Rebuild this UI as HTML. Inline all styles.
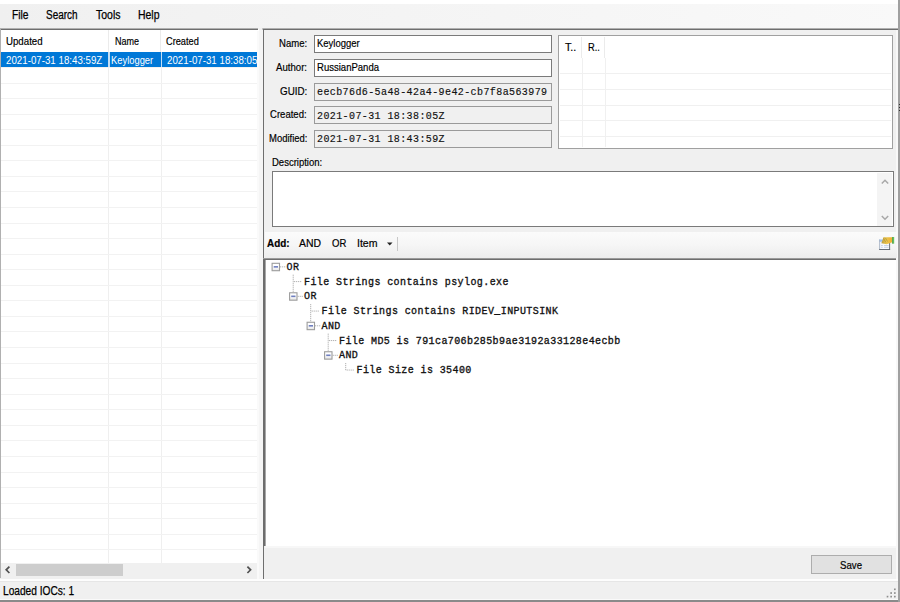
<!DOCTYPE html>
<html><head><meta charset="utf-8"><style>
html,body{margin:0;padding:0;}
body{width:900px;height:602px;position:relative;overflow:hidden;background:#f0f0f0;font-family:'Liberation Sans',sans-serif;}
.t{position:absolute;white-space:pre;transform-origin:0 0;}
.b{position:absolute;box-sizing:border-box;}
</style></head><body>
<div class="b" style="left:0.00px;top:0.00px;width:900.00px;height:3.50px;background:#ffffff;"></div>
<div class="b" style="left:0.00px;top:3.50px;width:900.00px;height:24.50px;background:linear-gradient(to right,#f0f0f0,#f9f9f9);"></div>
<div class="t" style="left:12.20px;top:8.94px;font-size:12px;line-height:12px;font-weight:400;color:#000;transform:scaleX(0.8530);-webkit-text-stroke:0.25px #000;">File</div>
<div class="t" style="left:46.20px;top:8.94px;font-size:12px;line-height:12px;font-weight:400;color:#000;transform:scaleX(0.8283);-webkit-text-stroke:0.25px #000;">Search</div>
<div class="t" style="left:95.70px;top:8.94px;font-size:12px;line-height:12px;font-weight:400;color:#000;transform:scaleX(0.8745);-webkit-text-stroke:0.25px #000;">Tools</div>
<div class="t" style="left:138.20px;top:8.94px;font-size:12px;line-height:12px;font-weight:400;color:#000;transform:scaleX(0.8709);-webkit-text-stroke:0.25px #000;">Help</div>
<div class="b" style="left:0.00px;top:29.00px;width:258.50px;height:549.00px;background:#fff;"></div>
<div class="b" style="left:0.00px;top:28.00px;width:257.50px;height:1.00px;background:#b0b0b0;"></div>
<div class="b" style="left:0.00px;top:29.00px;width:257.50px;height:1.00px;background:#6e6e6e;"></div>
<div class="b" style="left:0.00px;top:28.00px;width:1.00px;height:550.00px;background:#b0b0b0;"></div>
<div class="b" style="left:257.00px;top:30.50px;width:1.50px;height:548.50px;background:#fafafa;"></div>
<div class="b" style="left:107.80px;top:30.00px;width:1.00px;height:22.00px;background:#ebebeb;"></div>
<div class="b" style="left:159.80px;top:30.00px;width:1.00px;height:22.00px;background:#ebebeb;"></div>
<div class="b" style="left:108.00px;top:66.70px;width:1.00px;height:496.05px;background:#efefef;"></div>
<div class="b" style="left:160.60px;top:66.70px;width:1.00px;height:496.05px;background:#efefef;"></div>
<div class="b" style="left:1.00px;top:66.94px;width:256.00px;height:1.00px;background:#f2f2f2;"></div>
<div class="b" style="left:1.00px;top:82.50px;width:256.00px;height:1.00px;background:#f2f2f2;"></div>
<div class="b" style="left:1.00px;top:98.06px;width:256.00px;height:1.00px;background:#f2f2f2;"></div>
<div class="b" style="left:1.00px;top:113.62px;width:256.00px;height:1.00px;background:#f2f2f2;"></div>
<div class="b" style="left:1.00px;top:129.18px;width:256.00px;height:1.00px;background:#f2f2f2;"></div>
<div class="b" style="left:1.00px;top:144.74px;width:256.00px;height:1.00px;background:#f2f2f2;"></div>
<div class="b" style="left:1.00px;top:160.30px;width:256.00px;height:1.00px;background:#f2f2f2;"></div>
<div class="b" style="left:1.00px;top:175.86px;width:256.00px;height:1.00px;background:#f2f2f2;"></div>
<div class="b" style="left:1.00px;top:191.42px;width:256.00px;height:1.00px;background:#f2f2f2;"></div>
<div class="b" style="left:1.00px;top:206.98px;width:256.00px;height:1.00px;background:#f2f2f2;"></div>
<div class="b" style="left:1.00px;top:222.54px;width:256.00px;height:1.00px;background:#f2f2f2;"></div>
<div class="b" style="left:1.00px;top:238.10px;width:256.00px;height:1.00px;background:#f2f2f2;"></div>
<div class="b" style="left:1.00px;top:253.66px;width:256.00px;height:1.00px;background:#f2f2f2;"></div>
<div class="b" style="left:1.00px;top:269.22px;width:256.00px;height:1.00px;background:#f2f2f2;"></div>
<div class="b" style="left:1.00px;top:284.78px;width:256.00px;height:1.00px;background:#f2f2f2;"></div>
<div class="b" style="left:1.00px;top:300.34px;width:256.00px;height:1.00px;background:#f2f2f2;"></div>
<div class="b" style="left:1.00px;top:315.90px;width:256.00px;height:1.00px;background:#f2f2f2;"></div>
<div class="b" style="left:1.00px;top:331.46px;width:256.00px;height:1.00px;background:#f2f2f2;"></div>
<div class="b" style="left:1.00px;top:347.02px;width:256.00px;height:1.00px;background:#f2f2f2;"></div>
<div class="b" style="left:1.00px;top:362.58px;width:256.00px;height:1.00px;background:#f2f2f2;"></div>
<div class="b" style="left:1.00px;top:378.14px;width:256.00px;height:1.00px;background:#f2f2f2;"></div>
<div class="b" style="left:1.00px;top:393.70px;width:256.00px;height:1.00px;background:#f2f2f2;"></div>
<div class="b" style="left:1.00px;top:409.26px;width:256.00px;height:1.00px;background:#f2f2f2;"></div>
<div class="b" style="left:1.00px;top:424.82px;width:256.00px;height:1.00px;background:#f2f2f2;"></div>
<div class="b" style="left:1.00px;top:440.38px;width:256.00px;height:1.00px;background:#f2f2f2;"></div>
<div class="b" style="left:1.00px;top:455.94px;width:256.00px;height:1.00px;background:#f2f2f2;"></div>
<div class="b" style="left:1.00px;top:471.50px;width:256.00px;height:1.00px;background:#f2f2f2;"></div>
<div class="b" style="left:1.00px;top:487.06px;width:256.00px;height:1.00px;background:#f2f2f2;"></div>
<div class="b" style="left:1.00px;top:502.62px;width:256.00px;height:1.00px;background:#f2f2f2;"></div>
<div class="b" style="left:1.00px;top:518.18px;width:256.00px;height:1.00px;background:#f2f2f2;"></div>
<div class="b" style="left:1.00px;top:533.74px;width:256.00px;height:1.00px;background:#f2f2f2;"></div>
<div class="b" style="left:1.00px;top:549.30px;width:256.00px;height:1.00px;background:#f2f2f2;"></div>
<div class="t" style="left:6.20px;top:35.57px;font-size:11.5px;line-height:11.5px;font-weight:400;color:#000;transform:scaleX(0.8417);-webkit-text-stroke:0.2px #000;">Updated</div>
<div class="t" style="left:114.80px;top:35.57px;font-size:11.5px;line-height:11.5px;font-weight:400;color:#000;transform:scaleX(0.7821);-webkit-text-stroke:0.2px #000;">Name</div>
<div class="t" style="left:166.10px;top:35.57px;font-size:11.5px;line-height:11.5px;font-weight:400;color:#000;transform:scaleX(0.8015);-webkit-text-stroke:0.2px #000;">Created</div>
<div class="b" style="left:108.10px;top:52.10px;width:1.80px;height:14.60px;background:#c4def4;"></div>
<div class="b" style="left:160.60px;top:52.10px;width:1.30px;height:14.60px;background:#c4def4;"></div>
<div class="b" style="left:1.00px;top:52.10px;width:107.10px;height:14.60px;background:#0078d7;"></div>
<div class="b" style="left:109.90px;top:52.10px;width:50.70px;height:14.60px;background:#0078d7;"></div>
<div class="b" style="left:161.90px;top:52.10px;width:95.10px;height:14.60px;background:#0078d7;"></div>
<div class="t" style="left:6.20px;top:54.97px;font-size:11.5px;line-height:11.5px;font-weight:400;color:#fff;transform:scaleX(0.8461);">2021-07-31 18:43:59Z</div>
<div class="t" style="left:110.80px;top:54.97px;font-size:11.5px;line-height:11.5px;font-weight:400;color:#fff;transform:scaleX(0.8147);">Keylogger</div>
<div style="position:absolute;left:161.9px;top:52.1px;width:95.1px;height:14.6px;overflow:hidden;">
<div class="t" style="left:4.80px;top:2.87px;font-size:11.5px;line-height:11.5px;font-weight:400;color:#fff;transform:scaleX(0.8461);">2021-07-31 18:38:05Z</div>
</div>
<div class="b" style="left:1.00px;top:562.75px;width:256.00px;height:15.25px;background:#f0f0f0;"></div>
<div class="b" style="left:16.30px;top:564.00px;width:106.60px;height:12.00px;background:#cdcdcd;"></div>
<svg style="position:absolute;left:0;top:560px" width="260" height="20"><path d="M9.4 6.6 L6.2 9.8 L9.4 13" stroke="#505050" stroke-width="1.7" fill="none"/><path d="M247.4 6.6 L250.6 9.8 L247.4 13" stroke="#505050" stroke-width="1.7" fill="none"/></svg>
<div class="b" style="left:263.00px;top:28.00px;width:634.50px;height:551.00px;background:#f0f0f0;"></div>
<div class="b" style="left:263.00px;top:28.00px;width:634.50px;height:1.00px;background:#b0b0b0;"></div>
<div class="b" style="left:263.00px;top:29.00px;width:634.50px;height:1.00px;background:#6e6e6e;"></div>
<div class="b" style="left:262.00px;top:28.00px;width:1.00px;height:550.50px;background:#c4c4c4;"></div>
<div class="b" style="left:263.00px;top:29.00px;width:1.00px;height:549.50px;background:#6e6e6e;"></div>
<div class="b" style="left:896.00px;top:30.00px;width:2.00px;height:549.00px;background:#f8f8f8;"></div>
<div class="t" style="left:278.90px;top:38.27px;font-size:11.5px;line-height:11.5px;font-weight:400;color:#000;transform:scaleX(0.8295);-webkit-text-stroke:0.2px #000;">Name:</div>
<div class="t" style="left:276.00px;top:62.07px;font-size:11.5px;line-height:11.5px;font-weight:400;color:#000;transform:scaleX(0.8361);-webkit-text-stroke:0.2px #000;">Author:</div>
<div class="t" style="left:279.70px;top:85.57px;font-size:11.5px;line-height:11.5px;font-weight:400;color:#000;transform:scaleX(0.8544);-webkit-text-stroke:0.2px #000;">GUID:</div>
<div class="t" style="left:270.40px;top:109.47px;font-size:11.5px;line-height:11.5px;font-weight:400;color:#000;transform:scaleX(0.8298);-webkit-text-stroke:0.2px #000;">Created:</div>
<div class="t" style="left:268.60px;top:133.37px;font-size:11.5px;line-height:11.5px;font-weight:400;color:#000;transform:scaleX(0.8228);-webkit-text-stroke:0.2px #000;">Modified:</div>
<div class="b" style="left:314.00px;top:35.00px;width:238.00px;height:18.00px;background:#fff;border:1px solid #7a7a7a;"></div>
<div class="b" style="left:314.00px;top:58.80px;width:238.00px;height:18.00px;background:#fff;border:1px solid #7a7a7a;"></div>
<div class="b" style="left:314.00px;top:82.70px;width:238.00px;height:18.00px;background:#f0f0f0;border:1px solid #9a9a9a;"></div>
<div class="b" style="left:314.00px;top:106.30px;width:238.00px;height:18.00px;background:#f0f0f0;border:1px solid #9a9a9a;"></div>
<div class="b" style="left:314.00px;top:130.00px;width:238.00px;height:18.00px;background:#f0f0f0;border:1px solid #9a9a9a;"></div>
<div class="t" style="left:316.80px;top:38.27px;font-size:11.5px;line-height:11.5px;font-weight:400;color:#000;transform:scaleX(0.8244);-webkit-text-stroke:0.2px #000;">Keylogger</div>
<div class="t" style="left:317.00px;top:62.07px;font-size:11.5px;line-height:11.5px;font-weight:400;color:#000;transform:scaleX(0.8287);-webkit-text-stroke:0.2px #000;">RussianPanda</div>
<div class="t" style="left:317.00px;top:88.20px;font-size:10px;line-height:10px;font-weight:400;color:#111;font-family:'Liberation Mono', monospace;letter-spacing:0.4px;-webkit-text-stroke:0.15px #111;">eecb76d6-5a48-42a4-9e42-cb7f8a563979</div>
<div class="t" style="left:317.00px;top:111.80px;font-size:10px;line-height:10px;font-weight:400;color:#111;font-family:'Liberation Mono', monospace;letter-spacing:0.4px;-webkit-text-stroke:0.15px #111;">2021-07-31 18:38:05Z</div>
<div class="t" style="left:317.00px;top:135.40px;font-size:10px;line-height:10px;font-weight:400;color:#111;font-family:'Liberation Mono', monospace;letter-spacing:0.4px;-webkit-text-stroke:0.15px #111;">2021-07-31 18:43:59Z</div>
<div class="b" style="left:558.00px;top:35.00px;width:335.00px;height:113.50px;background:#fff;border:1px solid #a0a0a0;"></div>
<div class="b" style="left:581.20px;top:37.00px;width:1.00px;height:21.30px;background:#ebebeb;"></div>
<div class="b" style="left:603.90px;top:37.00px;width:1.00px;height:21.30px;background:#ebebeb;"></div>
<div class="b" style="left:582.30px;top:58.30px;width:1.00px;height:89.20px;background:#f0f0f0;"></div>
<div class="b" style="left:604.90px;top:58.30px;width:1.00px;height:89.20px;background:#f0f0f0;"></div>
<div class="b" style="left:560.00px;top:73.40px;width:331.00px;height:1.00px;background:#f0f0f0;"></div>
<div class="b" style="left:560.00px;top:88.95px;width:331.00px;height:1.00px;background:#f0f0f0;"></div>
<div class="b" style="left:560.00px;top:104.50px;width:331.00px;height:1.00px;background:#f0f0f0;"></div>
<div class="b" style="left:560.00px;top:120.05px;width:331.00px;height:1.00px;background:#f0f0f0;"></div>
<div class="b" style="left:560.00px;top:135.60px;width:331.00px;height:1.00px;background:#f0f0f0;"></div>
<div class="t" style="left:565.20px;top:42.07px;font-size:11.5px;line-height:11.5px;font-weight:400;color:#000;transform:scaleX(0.9308);-webkit-text-stroke:0.2px #000;">T..</div>
<div class="t" style="left:588.10px;top:42.07px;font-size:11.5px;line-height:11.5px;font-weight:400;color:#000;transform:scaleX(0.8094);-webkit-text-stroke:0.2px #000;">R..</div>
<div class="t" style="left:272.00px;top:157.27px;font-size:11.5px;line-height:11.5px;font-weight:400;color:#000;transform:scaleX(0.8268);-webkit-text-stroke:0.2px #000;">Description:</div>
<div class="b" style="left:272.00px;top:171.20px;width:622.00px;height:55.60px;background:#fff;border:1px solid #7a7a7a;"></div>
<div class="b" style="left:877.30px;top:172.50px;width:15.20px;height:53.00px;background:#f4f4f4;"></div>
<svg style="position:absolute;left:877px;top:172px" width="16" height="54"><path d="M4.8 11.5 L8 8.3 L11.2 11.5" stroke="#a8a8a8" stroke-width="1.5" fill="none"/><path d="M4.8 44 L8 47.2 L11.2 44" stroke="#a8a8a8" stroke-width="1.5" fill="none"/></svg>
<div class="b" style="left:265.00px;top:232.00px;width:631.50px;height:26.00px;background:linear-gradient(to bottom,#fbfbfb,#f6f6f6 50%,#ececec);"></div>
<div class="t" style="left:266.90px;top:237.77px;font-size:11.5px;line-height:11.5px;font-weight:700;color:#000;transform:scaleX(0.8630);-webkit-text-stroke:0.2px #000;">Add:</div>
<div class="t" style="left:298.50px;top:237.57px;font-size:11.5px;line-height:11.5px;font-weight:400;color:#000;transform:scaleX(0.9060);-webkit-text-stroke:0.2px #000;">AND</div>
<div class="t" style="left:331.70px;top:237.57px;font-size:11.5px;line-height:11.5px;font-weight:400;color:#000;transform:scaleX(0.8290);-webkit-text-stroke:0.2px #000;">OR</div>
<div class="t" style="left:356.70px;top:237.57px;font-size:11.5px;line-height:11.5px;font-weight:400;color:#000;transform:scaleX(0.9162);-webkit-text-stroke:0.2px #000;">Item</div>
<svg style="position:absolute;left:385px;top:240px" width="10" height="8"><path d="M2 2.5 L7.5 2.5 L4.75 5.5 Z" fill="#222"/></svg>
<div class="b" style="left:397.00px;top:237.20px;width:1.00px;height:13.40px;background:#c8c8c8;"></div>
<svg style="position:absolute;left:877px;top:234px" width="20" height="18" viewBox="0 0 20 18">
<defs><linearGradient id="hy" x1="0" y1="0" x2="1" y2="0"><stop offset="0" stop-color="#b89a3a"/><stop offset="0.45" stop-color="#e9c650"/><stop offset="1" stop-color="#f2ae2e"/></linearGradient>
<linearGradient id="gr" x1="0" y1="0" x2="1" y2="0"><stop offset="0" stop-color="#3c9a3c"/><stop offset="1" stop-color="#7ccd6a"/></linearGradient></defs>
<rect x="2.2" y="5.5" width="10.8" height="10.3" fill="#f6f9fd"/>
<rect x="2.2" y="5.5" width="10.8" height="2.3" fill="#9cc0f0"/>
<rect x="2.2" y="5.5" width="0.9" height="10.3" fill="#a8b4c4"/>
<rect x="12.2" y="9" width="0.9" height="6.8" fill="#5a626c"/>
<rect x="2.2" y="15" width="10.9" height="0.9" fill="#555d68"/>
<path d="M4 11.5h1.8M7 11.5h4.6M4 13.3h1.8M7 13.3h4.6" stroke="#bccae0" stroke-width="0.8"/>
<path d="M4.3 9.2 L5.6 6 L6.4 3.3 L15.2 3.3 L15.2 8.2 L12.5 9.2 L9.5 10.2 L7.2 9.8 Z" fill="url(#hy)"/>
<path d="M6.5 4.5 L9 8.5 M8.5 4 L10.5 7.5" stroke="#a88a30" stroke-width="0.6" fill="none"/>
<rect x="15.1" y="3" width="2.1" height="6.7" fill="url(#gr)"/>
</svg>
<div class="b" style="left:263.00px;top:258.50px;width:633.30px;height:287.50px;background:#fff;"></div>
<div class="b" style="left:263.00px;top:258.00px;width:633.30px;height:1.00px;background:#9a9a9a;"></div>
<div class="b" style="left:263.00px;top:259.00px;width:633.30px;height:1.00px;background:#6d6d6d;"></div>
<div class="b" style="left:263.00px;top:258.50px;width:2.00px;height:287.50px;background:#6d6d6d;"></div>
<div class="b" style="left:265.00px;top:260.00px;width:1.00px;height:286.00px;background:#a8a8a8;"></div>
<div class="b" style="left:265.00px;top:546.00px;width:631.30px;height:1.50px;background:#f7f7f7;"></div>
<div class="b" style="left:258.50px;top:30.00px;width:4.00px;height:549.00px;background:#f5f5f5;"></div>
<div class="t" style="left:286.50px;top:262.90px;font-size:10px;line-height:10px;font-weight:400;color:#111;font-family:'Liberation Mono', monospace;letter-spacing:0.4px;-webkit-text-stroke:0.3px #111;">OR</div>
<div class="t" style="left:304.00px;top:277.64px;font-size:10px;line-height:10px;font-weight:400;color:#111;font-family:'Liberation Mono', monospace;letter-spacing:0.4px;-webkit-text-stroke:0.32px #111;">File Strings contains psylog.exe</div>
<div class="t" style="left:304.00px;top:292.38px;font-size:10px;line-height:10px;font-weight:400;color:#111;font-family:'Liberation Mono', monospace;letter-spacing:0.4px;-webkit-text-stroke:0.3px #111;">OR</div>
<div class="t" style="left:321.50px;top:307.12px;font-size:10px;line-height:10px;font-weight:400;color:#111;font-family:'Liberation Mono', monospace;letter-spacing:0.4px;-webkit-text-stroke:0.32px #111;">File Strings contains RIDEV_INPUTSINK</div>
<div class="t" style="left:321.50px;top:321.86px;font-size:10px;line-height:10px;font-weight:400;color:#111;font-family:'Liberation Mono', monospace;letter-spacing:0.4px;-webkit-text-stroke:0.32px #111;">AND</div>
<div class="t" style="left:339.00px;top:336.60px;font-size:10px;line-height:10px;font-weight:400;color:#111;font-family:'Liberation Mono', monospace;letter-spacing:0.4px;-webkit-text-stroke:0.32px #111;">File MD5 is 791ca706b285b9ae3192a33128e4ecbb</div>
<div class="t" style="left:339.00px;top:351.34px;font-size:10px;line-height:10px;font-weight:400;color:#111;font-family:'Liberation Mono', monospace;letter-spacing:0.4px;-webkit-text-stroke:0.32px #111;">AND</div>
<div class="t" style="left:356.50px;top:366.08px;font-size:10px;line-height:10px;font-weight:400;color:#111;font-family:'Liberation Mono', monospace;letter-spacing:0.4px;-webkit-text-stroke:0.32px #111;">File Size is 35400</div>
<svg style="position:absolute;left:263px;top:258px" width="634" height="130">
<defs><linearGradient id="bg" x1="0" y1="0" x2="0" y2="1"><stop offset="0.4" stop-color="#fff"/><stop offset="1" stop-color="#e6e6e6"/></linearGradient></defs>
<rect x="17.20" y="8.35" width="1" height="1" fill="#a0a0a0"/>
<rect x="19.20" y="8.35" width="1" height="1" fill="#a0a0a0"/>
<rect x="21.20" y="8.35" width="1" height="1" fill="#a0a0a0"/>
<rect x="9.10" y="5.30" width="7.4" height="7.4" fill="url(#bg)" stroke="#9c9c9c" stroke-width="1.1"/>
<rect x="10.70" y="8.05" width="4.3" height="1.6" fill="#6f7fc0"/>
<rect x="31.20" y="23.09" width="1" height="1" fill="#a0a0a0"/>
<rect x="33.20" y="23.09" width="1" height="1" fill="#a0a0a0"/>
<rect x="35.20" y="23.09" width="1" height="1" fill="#a0a0a0"/>
<rect x="37.20" y="23.09" width="1" height="1" fill="#a0a0a0"/>
<rect x="34.70" y="37.83" width="1" height="1" fill="#a0a0a0"/>
<rect x="36.70" y="37.83" width="1" height="1" fill="#a0a0a0"/>
<rect x="38.70" y="37.83" width="1" height="1" fill="#a0a0a0"/>
<rect x="26.60" y="34.78" width="7.4" height="7.4" fill="url(#bg)" stroke="#9c9c9c" stroke-width="1.1"/>
<rect x="28.20" y="37.53" width="4.3" height="1.6" fill="#6f7fc0"/>
<rect x="48.70" y="52.57" width="1" height="1" fill="#a0a0a0"/>
<rect x="50.70" y="52.57" width="1" height="1" fill="#a0a0a0"/>
<rect x="52.70" y="52.57" width="1" height="1" fill="#a0a0a0"/>
<rect x="54.70" y="52.57" width="1" height="1" fill="#a0a0a0"/>
<rect x="52.20" y="67.31" width="1" height="1" fill="#a0a0a0"/>
<rect x="54.20" y="67.31" width="1" height="1" fill="#a0a0a0"/>
<rect x="56.20" y="67.31" width="1" height="1" fill="#a0a0a0"/>
<rect x="44.10" y="64.26" width="7.4" height="7.4" fill="url(#bg)" stroke="#9c9c9c" stroke-width="1.1"/>
<rect x="45.70" y="67.01" width="4.3" height="1.6" fill="#6f7fc0"/>
<rect x="66.20" y="82.05" width="1" height="1" fill="#a0a0a0"/>
<rect x="68.20" y="82.05" width="1" height="1" fill="#a0a0a0"/>
<rect x="70.20" y="82.05" width="1" height="1" fill="#a0a0a0"/>
<rect x="72.20" y="82.05" width="1" height="1" fill="#a0a0a0"/>
<rect x="69.70" y="96.79" width="1" height="1" fill="#a0a0a0"/>
<rect x="71.70" y="96.79" width="1" height="1" fill="#a0a0a0"/>
<rect x="73.70" y="96.79" width="1" height="1" fill="#a0a0a0"/>
<rect x="61.60" y="93.74" width="7.4" height="7.4" fill="url(#bg)" stroke="#9c9c9c" stroke-width="1.1"/>
<rect x="63.20" y="96.49" width="4.3" height="1.6" fill="#6f7fc0"/>
<rect x="83.70" y="111.53" width="1" height="1" fill="#a0a0a0"/>
<rect x="85.70" y="111.53" width="1" height="1" fill="#a0a0a0"/>
<rect x="87.70" y="111.53" width="1" height="1" fill="#a0a0a0"/>
<rect x="89.70" y="111.53" width="1" height="1" fill="#a0a0a0"/>
<rect x="29.70" y="16.72" width="1" height="1" fill="#a0a0a0"/>
<rect x="29.70" y="18.72" width="1" height="1" fill="#a0a0a0"/>
<rect x="29.70" y="20.72" width="1" height="1" fill="#a0a0a0"/>
<rect x="29.70" y="22.72" width="1" height="1" fill="#a0a0a0"/>
<rect x="29.70" y="24.72" width="1" height="1" fill="#a0a0a0"/>
<rect x="29.70" y="26.72" width="1" height="1" fill="#a0a0a0"/>
<rect x="29.70" y="28.72" width="1" height="1" fill="#a0a0a0"/>
<rect x="29.70" y="30.72" width="1" height="1" fill="#a0a0a0"/>
<rect x="29.70" y="32.72" width="1" height="1" fill="#a0a0a0"/>
<rect x="47.20" y="46.20" width="1" height="1" fill="#a0a0a0"/>
<rect x="47.20" y="48.20" width="1" height="1" fill="#a0a0a0"/>
<rect x="47.20" y="50.20" width="1" height="1" fill="#a0a0a0"/>
<rect x="47.20" y="52.20" width="1" height="1" fill="#a0a0a0"/>
<rect x="47.20" y="54.20" width="1" height="1" fill="#a0a0a0"/>
<rect x="47.20" y="56.20" width="1" height="1" fill="#a0a0a0"/>
<rect x="47.20" y="58.20" width="1" height="1" fill="#a0a0a0"/>
<rect x="47.20" y="60.20" width="1" height="1" fill="#a0a0a0"/>
<rect x="47.20" y="62.20" width="1" height="1" fill="#a0a0a0"/>
<rect x="64.70" y="75.68" width="1" height="1" fill="#a0a0a0"/>
<rect x="64.70" y="77.68" width="1" height="1" fill="#a0a0a0"/>
<rect x="64.70" y="79.68" width="1" height="1" fill="#a0a0a0"/>
<rect x="64.70" y="81.68" width="1" height="1" fill="#a0a0a0"/>
<rect x="64.70" y="83.68" width="1" height="1" fill="#a0a0a0"/>
<rect x="64.70" y="85.68" width="1" height="1" fill="#a0a0a0"/>
<rect x="64.70" y="87.68" width="1" height="1" fill="#a0a0a0"/>
<rect x="64.70" y="89.68" width="1" height="1" fill="#a0a0a0"/>
<rect x="64.70" y="91.68" width="1" height="1" fill="#a0a0a0"/>
<rect x="82.20" y="105.16" width="1" height="1" fill="#a0a0a0"/>
<rect x="82.20" y="107.16" width="1" height="1" fill="#a0a0a0"/>
<rect x="82.20" y="109.16" width="1" height="1" fill="#a0a0a0"/>
<rect x="82.20" y="111.16" width="1" height="1" fill="#a0a0a0"/>
</svg>
<div class="b" style="left:811.40px;top:555.20px;width:80.60px;height:18.80px;background:#e1e1e1;border:1px solid #adadad;"></div>
<div class="t" style="left:840.00px;top:559.97px;font-size:11.5px;line-height:11.5px;font-weight:400;color:#000;transform:scaleX(0.8391);-webkit-text-stroke:0.2px #000;">Save</div>
<div class="b" style="left:0.00px;top:579.00px;width:898.00px;height:1.50px;background:#fdfdfd;"></div>
<div class="b" style="left:0.00px;top:580.50px;width:898.00px;height:1.00px;background:#e6e6e6;"></div>
<div class="t" style="left:2.80px;top:585.04px;font-size:12px;line-height:12px;font-weight:400;color:#000;transform:scaleX(0.8458);-webkit-text-stroke:0.25px #000;">Loaded IOCs: 1</div>
<div class="b" style="left:0.00px;top:599.00px;width:898.00px;height:1.00px;background:#fafafa;"></div>
<div class="b" style="left:0.00px;top:600.00px;width:900.00px;height:2.00px;background:#8a8a8a;"></div>
<div class="b" style="left:898.00px;top:0.00px;width:2.00px;height:602.00px;background:#a0a0a0;"></div>
<svg style="position:absolute;left:880px;top:582px" width="18" height="18"><rect x="14.40" y="6.90" width="1.8" height="1.8" fill="#fcfcfc"/><rect x="14.00" y="6.50" width="1.7" height="1.7" fill="#8e8e8e"/><rect x="10.70" y="10.60" width="1.8" height="1.8" fill="#fcfcfc"/><rect x="10.30" y="10.20" width="1.7" height="1.7" fill="#8e8e8e"/><rect x="14.40" y="10.60" width="1.8" height="1.8" fill="#fcfcfc"/><rect x="14.00" y="10.20" width="1.7" height="1.7" fill="#8e8e8e"/><rect x="7.10" y="14.20" width="1.8" height="1.8" fill="#fcfcfc"/><rect x="6.70" y="13.80" width="1.7" height="1.7" fill="#8e8e8e"/><rect x="10.70" y="14.20" width="1.8" height="1.8" fill="#fcfcfc"/><rect x="10.30" y="13.80" width="1.7" height="1.7" fill="#8e8e8e"/><rect x="14.40" y="14.20" width="1.8" height="1.8" fill="#fcfcfc"/><rect x="14.00" y="13.80" width="1.7" height="1.7" fill="#8e8e8e"/></svg>
<div class="b" style="left:898.80px;top:103.90px;width:1.20px;height:1.20px;background:#303030;"></div>
<div class="b" style="left:898.80px;top:106.90px;width:1.20px;height:1.20px;background:#303030;"></div>
<div class="b" style="left:898.80px;top:109.90px;width:1.20px;height:1.20px;background:#303030;"></div>
</body></html>
